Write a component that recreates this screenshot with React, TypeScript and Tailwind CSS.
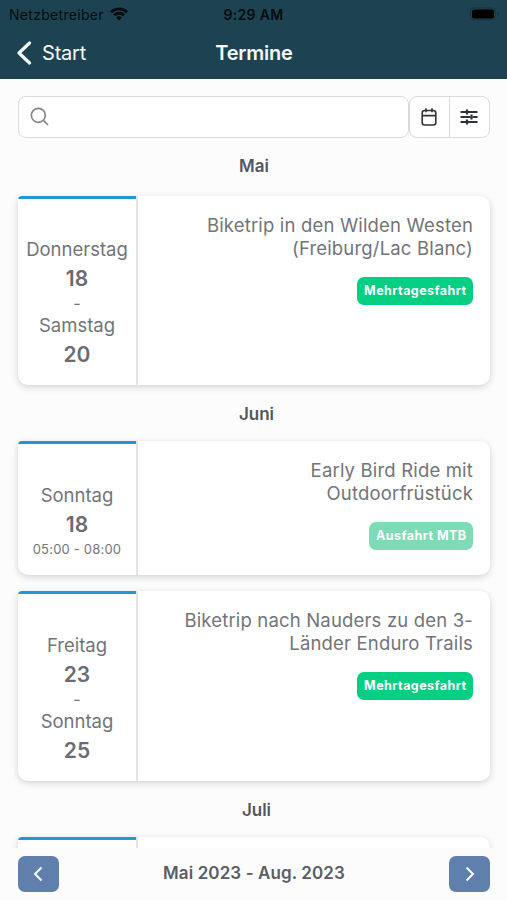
import React from "react";

type Slot = { day: string; date: string };
type Event = {
  from: Slot;
  to?: Slot;
  time?: string;
  title: string[];
  tag: string;
  faded?: boolean;
};

const wildenWesten: Event = {
  from: { day: "Donnerstag", date: "18" },
  to: { day: "Samstag", date: "20" },
  title: ["Biketrip in den Wilden Westen", "(Freiburg/Lac Blanc)"],
  tag: "Mehrtagesfahrt",
};
const earlyBird: Event = {
  from: { day: "Sonntag", date: "18" },
  time: "05:00 - 08:00",
  title: ["Early Bird Ride mit", "Outdoorfrüstück"],
  tag: "Ausfahrt MTB",
  faded: true,
};
const nauders: Event = {
  from: { day: "Freitag", date: "23" },
  to: { day: "Sonntag", date: "25" },
  title: ["Biketrip nach Nauders zu den 3-", "Länder Enduro Trails"],
  tag: "Mehrtagesfahrt",
};

function Day({ slot }: { slot: Slot }) {
  return (
    <>
      <div className="h-[23px] text-[18.5px] leading-[23px]">{slot.day}</div>
      <div className="h-[34px] text-[21px] font-semibold leading-[36px] text-[#6a6c71]">{slot.date}</div>
    </>
  );
}

function EventCard({ event, height, offset = "pt-[39px]" }: { event?: Event; height: string; offset?: string }) {
  return (
    <article
      className={`flex shrink-0 overflow-hidden rounded-[10px] rounded-tl-[4px] bg-white text-[#717479] shadow-[0_2px_7px_rgba(0,0,0,0.17)] ${height}`}
    >
      <div className={`w-[118px] shrink-0 border-t-[3px] border-[#2496d6] text-center ${offset}`}>
        {event && <Day slot={event.from} />}
        {event?.to && (
          <>
            <div className="h-[19px] text-[16px] leading-[17px]">-</div>
            <Day slot={event.to} />
          </>
        )}
        {event?.time && (
          <div className="text-[13px] leading-[17px] tracking-[0.2px]">{event.time}</div>
        )}
      </div>
      <div className="flex flex-1 flex-col items-end border-l-2 border-[#e4e4e5] pr-[17px] pt-[18px]">
        {event?.title.map((line) => (
          <div key={line} className="whitespace-nowrap text-[18.5px] leading-[23.3px] tracking-[0.17px]">
            {line}
          </div>
        ))}
        {event && (
          <span
            className={`mt-[16px] h-[28px] rounded-[7px] pl-[7px] pr-[6.500px] text-[12.5px] font-bold leading-[27px] tracking-[0.45px] text-white ${
              event.faded ? "bg-[#7ddbb5]" : "bg-[#05cf82]"
            }`}
          >
            {event.tag}
          </span>
        )}
      </div>
    </article>
  );
}

function Month({ name, className }: { name: string; className: string }) {
  return (
    <h2 className={`shrink-0 text-center text-[17px] font-semibold text-[#53565d] ${className}`}>{name}</h2>
  );
}

export default function App() {
  return (
    <div className="flex h-[900px] w-[507px] flex-col overflow-hidden bg-[#fcfcfd] font-['Inter',sans-serif]">
      <header className="h-[79px] shrink-0 bg-[#1d4353]">
        <div className="grid h-[28px] grid-cols-3 items-center pl-[9px] pr-[7px] text-[14px] text-[#050b0e]">
          <div className="flex items-center gap-[6px]">
            <span className="tracking-[0.3px]">Netzbetreiber</span>
            <svg width="18" height="14" viewBox="0 0 18 14" fill="none" stroke="currentColor" strokeWidth="2.8">
              <path d="M1 5.2a11.3 11.3 0 0 1 16 0" />
              <path d="M4 8.3a7.1 7.1 0 0 1 10 0" />
              <path d="M9 13.6 6.1 10.7a4.1 4.1 0 0 1 5.8 0Z" fill="currentColor" stroke="none" />
            </svg>
          </div>
          <div className="-ml-[2px] text-center font-semibold tracking-[0.3px]">9:29 AM</div>
          <svg className="justify-self-end" width="30" height="14" viewBox="0 0 30 14">
            <rect x="0.5" y="1" width="25" height="12" rx="3.5" fill="none" stroke="#163541" />
            <rect x="2" y="2.5" width="22" height="9" rx="2" fill="#000" />
            <path d="M27 5v4c1.3-.5 1.8-1.1 1.8-2S28.300 5.500 27 5Z" fill="#163541" />
          </svg>
        </div>
        <div className="grid h-[49px] grid-cols-3 items-center text-[20px] text-[#f3f8fa]">
          <div className="flex items-center gap-[10px] pl-[16px]">
            <svg width="16" height="24" viewBox="0 0 16 24" fill="none" stroke="currentColor" strokeWidth="3.2" strokeLinecap="round" strokeLinejoin="round">
              <path d="M13.500 2 3 12l10.500 10" />
            </svg>
            <span className="tracking-[-0.2px]">Start</span>
          </div>
          <h1 className="pl-[1px] text-center font-semibold tracking-[-0.2px]">Termine</h1>
        </div>
      </header>

      <main className="flex h-[769px] shrink-0 flex-col overflow-hidden px-[18px] pr-[17px] pt-[17px]">
        <div className="flex h-[42px] shrink-0 text-[#303236]">
          <div className="flex w-[391px] items-center rounded-[8px] border-[1.5px] border-[#dadada] bg-white pl-[11px] text-[#85878a]">
            <svg width="20" height="20" viewBox="0 0 20 20" fill="none" stroke="currentColor" strokeWidth="1.7">
              <circle cx="8.300" cy="8.300" r="7" />
              <path d="m13.200 13.200 4.800 4.800" />
            </svg>
          </div>
          <div className="flex flex-1 rounded-[8px] border-[1.5px] border-[#dadada] bg-white">
            <button className="flex flex-1 items-center justify-center border-r-[1.5px] border-[#dadada]">
              <svg width="18" height="20" viewBox="0 0 18 20" fill="none" stroke="currentColor" strokeWidth="1.6">
                <rect x="2.200" y="3.500" width="13.600" height="14.500" rx="2.500" />
                <path d="M2 8.600h14M6 1.200v4M12 1.200v4" />
              </svg>
            </button>
            <button className="flex flex-1 items-center justify-center pr-[1px]">
              <svg width="18" height="18" viewBox="0 0 18 18" fill="none" stroke="currentColor" strokeWidth="1.9">
                <path d="M.5 4H6M8 4h9.500M.5 9H10.500M12.500 9h5M.5 14H6M8 14h9.500" />
                <path d="M7 1.500v5M11.500 6.500v5M7 11.500v5" strokeWidth="2.200" />
              </svg>
            </button>
          </div>
        </div>
        <Month name="Mai" className="h-[58px] leading-[57px]" />
        <EventCard event={wildenWesten} height="h-[189px]" />
        <Month name="Juni" className="h-[56px] pl-[5px] leading-[58px]" />
        <EventCard event={earlyBird} height="h-[134px]" offset="pt-[40px]" />
        <div className="h-[16px] shrink-0" />
        <EventCard event={nauders} height="h-[190px]" offset="pt-[40px]" />
        <Month name="Juli" className="h-[56px] pl-[5px] leading-[58px]" />
        <EventCard height="h-[134px]" />
      </main>

      <footer className="flex h-[52px] shrink-0 items-center justify-between pl-[18px] pr-[17px] text-white">
        <button className="flex h-[36px] w-[41px] items-center justify-center rounded-[7px] bg-[#5f80ad] pr-[2px]">
          <svg width="10" height="16" viewBox="0 0 10 16" fill="none" stroke="currentColor" strokeWidth="1.9">
            <path d="M8.500 1.500 2 8l6.500 6.500" />
          </svg>
        </button>
        <div className="text-[17px] font-semibold tracking-[0.1px] text-[#5b5d62]">Mai 2023 - Aug. 2023</div>
        <button className="flex h-[36px] w-[41px] items-center justify-center rounded-[7px] bg-[#5f80ad] pl-[2px]">
          <svg width="10" height="16" viewBox="0 0 10 16" fill="none" stroke="currentColor" strokeWidth="1.9">
            <path d="m1.500 1.500 6.500 6.500-6.500 6.500" />
          </svg>
        </button>
      </footer>
    </div>
  );
}
